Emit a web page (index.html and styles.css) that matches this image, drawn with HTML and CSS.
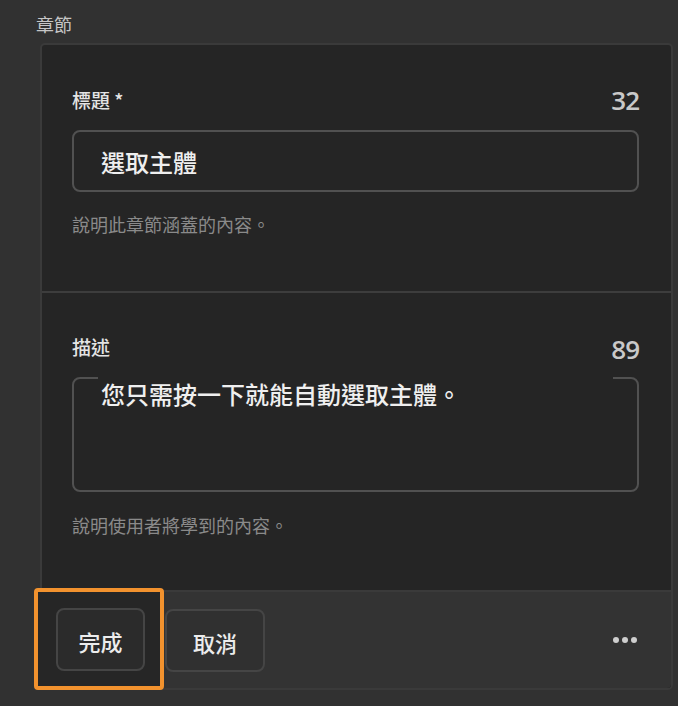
FILE: index.html
```html
<!DOCTYPE html>
<html lang="zh-Hant">
<head>
<meta charset="utf-8">
<link rel="stylesheet" href="styles.css">
</head>
<body>
<div class="page">
  <div class="group-label">章節</div>
  <div class="card">
    <div class="section section-title">
      <div class="field-head">
        <span class="field-label">標題 *</span>
        <span class="count">32</span>
      </div>
      <div class="input">選取主體</div>
      <div class="help">說明此章節涵蓋的內容。</div>
    </div>
    <div class="section section-desc">
      <div class="field-head">
        <span class="field-label">描述</span>
        <span class="count">89</span>
      </div>
      <div class="textarea"><div class="textarea-text">您只需按一下就能自動選取主體。</div></div>
      <div class="help">說明使用者將學到的內容。</div>
    </div>
    <div class="footer">
      <div class="highlight">
        <button class="btn btn-done">完成</button>
      </div>
      <button class="btn btn-cancel">取消</button>
      <div class="more" aria-label="更多">
        <span class="dot"></span><span class="dot"></span><span class="dot"></span>
      </div>
    </div>
  </div>
</div>
</body>
</html>
```

FILE: styles.css
```css
* { box-sizing: border-box; }
html, body {
  margin: 0;
  padding: 0;
  background: #313131;
}
body {
  font-family: "Noto Sans CJK TC", "Noto Sans", sans-serif;
  width: 678px;
  height: 706px;
  overflow: hidden;
}
.page {
  padding: 14px 5px 16px 36px;
}
.group-label {
  font-size: 18px;
  line-height: 20px;
  color: #c6c6c6;
}
.card {
  margin-top: 9px;
  margin-left: 4px;
  width: 633px;
  border: 2px solid #3a3a3a;
  border-radius: 5px;
  background: #252525;
}
.section {
  padding: 0 32px 0 30px;
}
.section-title {
  padding-top: 42px;
  padding-bottom: 57px;
  border-bottom: 2px solid #3d3d3d;
}
.section-desc {
  padding-top: 41px;
  padding-bottom: 55px;
}
.field-head {
  display: flex;
  justify-content: space-between;
  align-items: center;
  height: 24px;
}
.field-label {
  font-size: 19px;
  font-weight: 500;
  color: #e4e4e4;
}
.count {
  font-family: "Open Sans", "Noto Sans", sans-serif;
  font-size: 26px;
  letter-spacing: -1px;
  font-weight: 600;
  color: #c9c9c9;
  position: relative;
  top: 1px;
}
.section-desc .count {
  top: 3px;
}
.input {
  margin-top: 19px;
  height: 62px;
  border: 2px solid #515151;
  border-radius: 8px;
  padding-left: 27px;
  display: flex;
  align-items: center;
  font-size: 24px;
  font-weight: 500;
  color: #efefef;
}
.textarea {
  margin-top: 19px;
  height: 115px;
  border: 2px solid #515151;
  border-radius: 8px;
}
.textarea-text {
  margin: -2px 24px 0 24px;
  padding-left: 3px;
  background: #252525;
  font-size: 24px;
  line-height: 34px;
  font-weight: 500;
  color: #efefef;
}
.help {
  font-size: 18px;
  line-height: 20px;
  color: #8a8a8a;
}
.section-title .help { margin-top: 22px; }
.section-desc .help { margin-top: 23px; }
.footer {
  border-top: 2px solid #3a3a3a;
  background: #333333;
  height: 98px;
  display: flex;
  align-items: center;
  padding-right: 34px;
  border-radius: 0 0 4px 4px;
}
.highlight {
  margin-left: -8px;
  margin-top: -4px;
  margin-bottom: -2px;
  align-self: stretch;
  width: 130px;
  border: 4px solid #f2922e;
  border-radius: 4px;
  background: #262626;
  display: flex;
  align-items: center;
  padding-left: 18px;
}
.btn {
  height: 63px;
  border: 2px solid #454545;
  border-radius: 8px;
  background: #2b2b2b;
  color: #ececec;
  font-family: "Noto Sans CJK TC", "Noto Sans", sans-serif;
  font-size: 22px;
  font-weight: 500;
  padding: 4px 0 0 0;
  cursor: pointer;
}
.btn-done { width: 89px; }
.btn-cancel {
  width: 100px;
  margin-left: 1px;
  background: #303030;
}
.more {
  margin-left: auto;
  display: flex;
  gap: 3px;
  align-items: center;
}
.dot {
  width: 6px;
  height: 6px;
  border-radius: 50%;
  background: #cfcfcf;
}
```
